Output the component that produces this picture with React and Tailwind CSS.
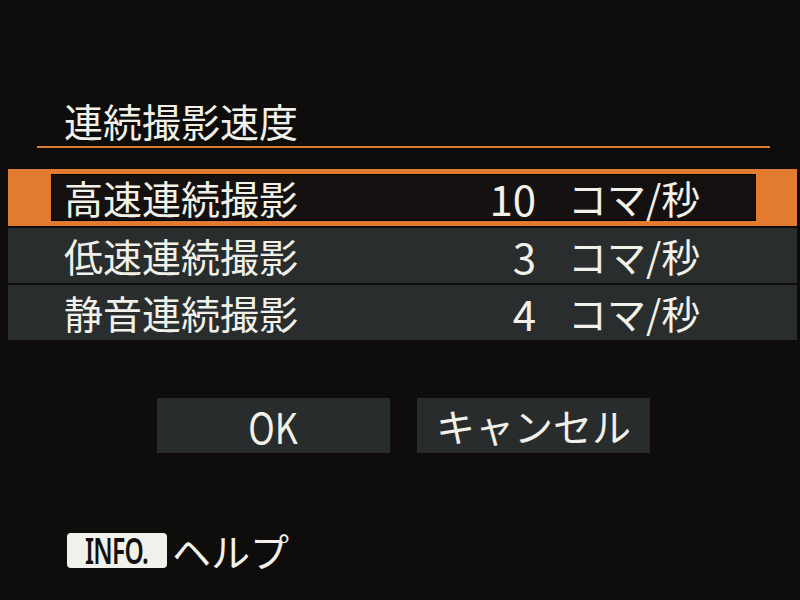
import React from 'react';

const rows = [
  { key: 'high', label: '高速連続撮影', value: '10' },
  { key: 'low', label: '低速連続撮影', value: '3' },
  { key: 'silent', label: '静音連続撮影', value: '4' },
];

const font = { fontFamily: '"Noto Sans CJK JP", "Noto Sans", sans-serif' };

const RowContent = ({ label, value }) => (
  <>
    <span className="w-[392px] shrink-0">{label}</span>
    <span className="w-[80px] shrink-0 text-right text-[42px]">{value}</span>
    <span className="ml-[32px]">コマ/秒</span>
  </>
);

const App = () => {
  return (
    <div
      className="flex h-[600px] w-[800px] flex-col overflow-hidden bg-[#0f0d0b] text-[39px] leading-none text-[#f1f1ea]"
      style={font}
    >
      <div className="ml-[64px] mt-[101px] h-[40px]">連続撮影速度</div>
      <div className="ml-[37px] mt-[5px] h-[2px] w-[733px] bg-[#e07a2e]" />

      <div className="ml-[8px] mt-[21px] flex w-[789px] flex-col gap-[2px]">
        {rows.map((row, i) =>
          i === 0 ? (
            <div key={row.key} className="h-[57px] bg-[#e27b30] py-[5px] pl-[43px] pr-[41px]">
              <div className="flex h-full items-center border border-black bg-[#141110] pl-[12px]">
                <RowContent {...row} />
              </div>
            </div>
          ) : (
            <div key={row.key} className="flex h-[55px] items-center bg-[#292d2d] pl-[56px]">
              <RowContent {...row} />
            </div>
          )
        )}
      </div>

      <div className="ml-[157px] mt-[58px] flex gap-[27px]">
        <button type="button" className="flex h-[55px] w-[233px] items-center justify-center bg-[#292c2c]">
          <span className="inline-block scale-x-[0.85] text-[42px]">OK</span>
        </button>
        <button type="button" className="flex h-[55px] w-[233px] items-center justify-center bg-[#292c2c]">
          キャンセル
        </button>
      </div>

      <div className="ml-[67px] mt-[78px] flex items-center">
        <span className="flex h-[35px] w-[100px] items-center justify-center rounded-[4px] bg-[#f1f1ec] text-[#111]">
          <span
            className="inline-block scale-x-[0.68] text-[36px] font-semibold tracking-[-1px]"
            style={{ fontFamily: '"Noto Sans", sans-serif' }}
          >
            INFO.
          </span>
        </span>
        <span className="ml-[5px]">ヘルプ</span>
      </div>
    </div>
  );
};

export default App;
